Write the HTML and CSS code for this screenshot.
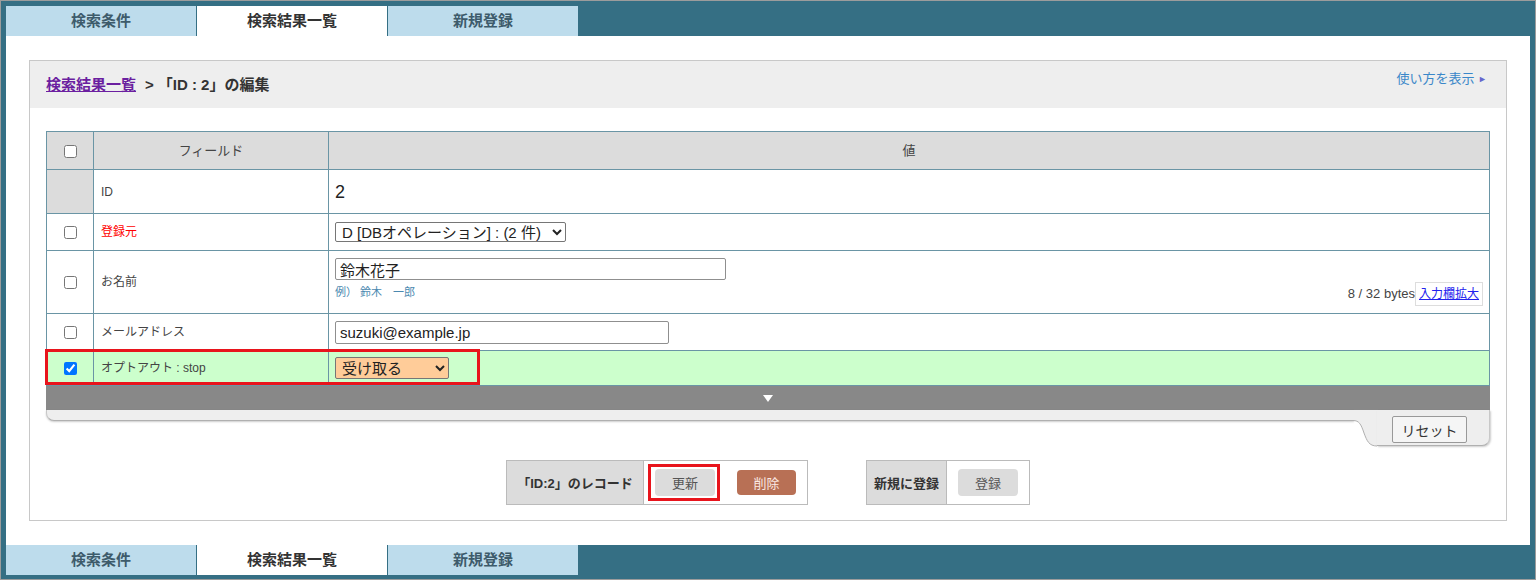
FILE: index.html
```html
<!DOCTYPE html>
<html lang="ja">
<head>
    <meta charset="UTF-8">
    <title>「ID : 2」の編集</title>
    <link rel="stylesheet" href="styles.css">
</head>
<body>
<div class="frame">
    <nav class="tabs">
        <a class="tab" href="#">検索条件</a>
        <a class="tab active" href="#">検索結果一覧</a>
        <a class="tab" href="#">新規登録</a>
    </nav>

    <main class="content">
        <section class="panel">
            <header class="panel-head">
                <div class="crumb"><a href="#">検索結果一覧</a><span class="sep">&gt;</span>「ID : 2」の編集</div>
                <a class="howto" href="#">使い方を表示 <span class="tri">&#9658;</span></a>
            </header>

            <div class="panel-body">
                <div class="table-wrap">
                    <table class="edit">
                        <colgroup>
                            <col class="c-check">
                            <col class="c-field">
                            <col>
                        </colgroup>
                        <tr class="r-head">
                            <th><input type="checkbox"></th>
                            <th>フィールド</th>
                            <th>値</th>
                        </tr>
                        <tr class="r-id">
                            <td class="chk gray"></td>
                            <td class="label">ID</td>
                            <td class="val id-val">2</td>
                        </tr>
                        <tr class="r-src">
                            <td class="chk"><input type="checkbox"></td>
                            <td class="label req">登録元</td>
                            <td class="val">
                                <select class="sel src-sel">
                                    <option>D [DBオペレーション] : (2 件)</option>
                                </select>
                            </td>
                        </tr>
                        <tr class="r-name">
                            <td class="chk"><input type="checkbox"></td>
                            <td class="label">お名前</td>
                            <td class="val name-val">
                                <div class="name-box">
                                    <div>
                                        <input class="txt name-input" type="text" value="鈴木花子">
                                        <div class="example">例） 鈴木　一郎</div>
                                    </div>
                                    <div class="counter">
                                        <span>8 / 32 bytes</span>
                                        <span class="grow"><a href="#">入力欄拡大</a></span>
                                    </div>
                                </div>
                            </td>
                        </tr>
                        <tr class="r-mail">
                            <td class="chk"><input type="checkbox"></td>
                            <td class="label">メールアドレス</td>
                            <td class="val"><input class="txt mail-input" type="text" value="suzuki@example.jp"></td>
                        </tr>
                        <tr class="r-opt changed">
                            <td class="chk"><input type="checkbox" checked></td>
                            <td class="label">オプトアウト : stop</td>
                            <td class="val">
                                <select class="sel opt-sel">
                                    <option>受け取る</option>
                                </select>
                            </td>
                        </tr>
                    </table>
                    <div class="mark mark-row"></div>
                </div>

                <div class="expander"><span class="down"></span></div>

                <div class="foot">
                    <div class="foot-lip"></div>
                    <svg class="foot-curve" width="24" height="37" viewBox="0 0 24 37">
                        <path d="M0 0 H24 V36 C16 36 14 31 11 23 C8 14 6 10.5 0 10.5 Z" fill="#eeeeee"/>
                        <path d="M0 10.5 C6 10.5 8 14 11 23 C14 31 16 36 24 36" fill="none" stroke="#b0b0b0" stroke-width="1"/>
                    </svg>
                    <div class="foot-tab"><button class="reset">リセット</button></div>
                </div>

                <div class="actions">
                    <div class="act-box">
                        <div class="act-label rec">「ID:2」のレコード</div>
                        <div class="act-btns">
                            <span class="hl"><button class="btn">更新</button></span>
                            <button class="btn danger">削除</button>
                        </div>
                    </div>
                    <div class="act-box">
                        <div class="act-label new">新規に登録</div>
                        <div class="act-btns">
                            <button class="btn">登録</button>
                        </div>
                    </div>
                </div>
            </div>
        </section>
    </main>

    <nav class="tabs">
        <a class="tab" href="#">検索条件</a>
        <a class="tab active" href="#">検索結果一覧</a>
        <a class="tab" href="#">新規登録</a>
    </nav>
</div>
</body>
</html>
```

FILE: styles.css
```css
body {
    margin: 0;
    font-family: "Liberation Sans", "Noto Sans CJK JP", sans-serif;
    color: #333;
}

.frame {
    width: 1536px;
    height: 580px;
    box-sizing: border-box;
    border: 1px solid #9c9c9c;
    background-color: #356f84;
    padding: 5px 5px 4px 5px;
    display: flex;
    flex-direction: column;
}

/* tabs */
.tabs {
    display: flex;
    gap: 1px;
    height: 30px;
}

.tab {
    width: 190px;
    background-color: #bddcec;
    color: #3d5b6b;
    font-size: 15px;
    font-weight: bold;
    line-height: 30px;
    text-align: center;
    text-decoration: none;
}

.tab.active {
    background-color: #fff;
    color: #333;
}

/* content */
.content {
    background-color: #fff;
    height: 509px;
    box-sizing: border-box;
    padding: 24px 23px;
}

.panel {
    border: 1px solid #c8c8c8;
    height: 100%;
    box-sizing: border-box;
}

.panel-head {
    background-color: #eee;
    height: 47px;
    display: flex;
    justify-content: space-between;
    padding: 0 19px 0 16px;
}

.crumb {
    font-size: 15px;
    font-weight: bold;
    line-height: 47px;
}

.crumb a {
    color: #6b1fa0;
}

.crumb .sep {
    margin: 0 4px 0 9px;
}

.howto {
    font-size: 13px;
    line-height: 20px;
    margin-top: 8px;
    color: #3a87c9;
    text-decoration: none;
}

.howto .tri {
    color: #6666cc;
    font-size: 9px;
    vertical-align: 1px;
}

.panel-body {
    padding: 23px 16px 0 16px;
}

/* edit table */
.table-wrap {
    position: relative;
}

.edit {
    width: 100%;
    border-collapse: collapse;
    font-size: 12px;
    line-height: 16px;
}

.edit .c-check {
    width: 47px;
}

.edit .c-field {
    width: 235px;
}

.edit th,
.edit td {
    border: 1px solid #6a95a5;
    padding: 0;
}

.edit th {
    background-color: #dcdcdc;
    font-size: 13px;
    font-weight: normal;
    color: #444;
    height: 37px;
}

.edit input[type="checkbox"] {
    width: 13px;
    height: 13px;
    margin: 0;
    vertical-align: middle;
}

.chk {
    text-align: center;
}

.chk.gray {
    background-color: #dcdcdc;
}

.label {
    padding-left: 7px !important;
    color: #444;
}

.label.req {
    color: #f00;
}

.val {
    padding-left: 6px !important;
}

.r-id td { height: 43px; }
.r-src td { height: 36px; }
.r-name td { height: 62px; }
.r-mail td { height: 36px; }
.r-opt td { height: 34px; }

.id-val {
    font-size: 18px;
    color: #222;
}

.sel {
    font-family: "Liberation Sans", "Noto Sans CJK JP", sans-serif;
    font-size: 15px;
    height: 20px;
    padding: 0 2px;
    border: 1px solid #767676;
    border-radius: 2px;
    background-color: #fff;
    color: #222;
    vertical-align: middle;
}

.src-sel {
    width: 231px;
}

.opt-sel {
    width: 114px;
    height: 22px;
    background-color: #ffcc99;
}

.txt {
    display: block;
    font-family: "Liberation Sans", "Noto Sans CJK JP", sans-serif;
    font-size: 15px;
    height: 23px;
    box-sizing: border-box;
    padding: 0 4px;
    border: 1px solid #8f8f8f;
    border-radius: 2px;
    color: #222;
}

.name-input {
    width: 391px;
    height: 22px;
}

.mail-input {
    width: 334px;
}

.name-val {
    padding: 0 6px !important;
}

.name-box {
    display: flex;
    justify-content: space-between;
    align-items: flex-start;
    height: 48px;
}

.example {
    margin-top: 5px;
    font-size: 11px;
    line-height: 15px;
    color: #4b89b0;
}

.counter {
    align-self: flex-end;
    display: flex;
    align-items: center;
    font-size: 13px;
    color: #444;
}

.grow {
    border: 1px solid #ddd;
    padding: 3px 3px;
    line-height: 16px;
    font-size: 12px;
}

.grow a {
    color: #2222ee;
}

.changed td {
    background-color: #ccffcc;
}

.mark {
    position: absolute;
    border: 3px solid #e8141c;
    box-sizing: border-box;
}

.mark-row {
    left: -1px;
    top: 218px;
    width: 435px;
    height: 36px;
}

/* expander bar and reset */
.expander {
    background-color: #888;
    height: 24px;
    display: flex;
    justify-content: center;
    align-items: center;
}

.down {
    width: 0;
    height: 0;
    border-left: 5px solid transparent;
    border-right: 5px solid transparent;
    border-top: 7px solid #fff;
}

.foot {
    display: flex;
    align-items: flex-start;
}

.foot-lip {
    flex: 1;
    height: 10px;
    background-color: #eee;
    border-left: 1px solid #c8c8c8;
    border-bottom: 1px solid #b0b0b0;
    border-bottom-left-radius: 8px;
    box-shadow: 0 1px 2px rgba(0, 0, 0, 0.2);
}

.foot-curve {
    display: block;
    margin-left: -1px;
}

.foot-tab {
    width: 113px;
    height: 36px;
    background-color: #eee;
    border-right: 1px solid #c8c8c8;
    border-bottom: 1px solid #b0b0b0;
    border-bottom-right-radius: 8px;
    box-shadow: 1px 1px 2px rgba(0, 0, 0, 0.2);
    display: flex;
    justify-content: flex-end;
    align-items: flex-start;
    padding: 6px 22px 0 0;
    box-sizing: border-box;
}

.reset {
    width: 75px;
    height: 27px;
    font-family: "Noto Sans CJK JP", sans-serif;
    font-size: 14px;
    color: #333;
    background-color: #f5f5f5;
    border: 1px solid #999;
    border-radius: 2px;
    padding: 0;
}

/* action boxes */
.actions {
    display: flex;
    justify-content: center;
    gap: 58px;
    margin-top: 13px;
}

.act-box {
    display: flex;
    height: 45px;
    border: 1px solid #bbb;
    box-sizing: border-box;
}

.act-label {
    background-color: #dcdcdc;
    border-right: 1px solid #bbb;
    display: flex;
    align-items: center;
    justify-content: center;
    font-size: 13px;
    font-weight: bold;
    color: #333;
}

.act-label.rec {
    width: 136px;
}

.act-label.new {
    width: 79px;
}

.act-btns {
    display: flex;
    align-items: center;
    gap: 22px;
    padding: 0 11px;
}

.btn {
    width: 60px;
    height: 27px;
    border: none;
    border-radius: 4px;
    background-color: #dcdcdc;
    font-family: "Noto Sans CJK JP", sans-serif;
    font-size: 13px;
    color: #555;
    padding: 0;
}

.btn.danger {
    width: 59px;
    height: 25px;
    background-color: #b87055;
    color: #fbe9e2;
}

.hl {
    position: relative;
    display: inline-flex;
}

.hl::after {
    content: "";
    position: absolute;
    left: -7px;
    right: -5px;
    top: -5px;
    bottom: -5px;
    border: 3px solid #e8141c;
}
```
